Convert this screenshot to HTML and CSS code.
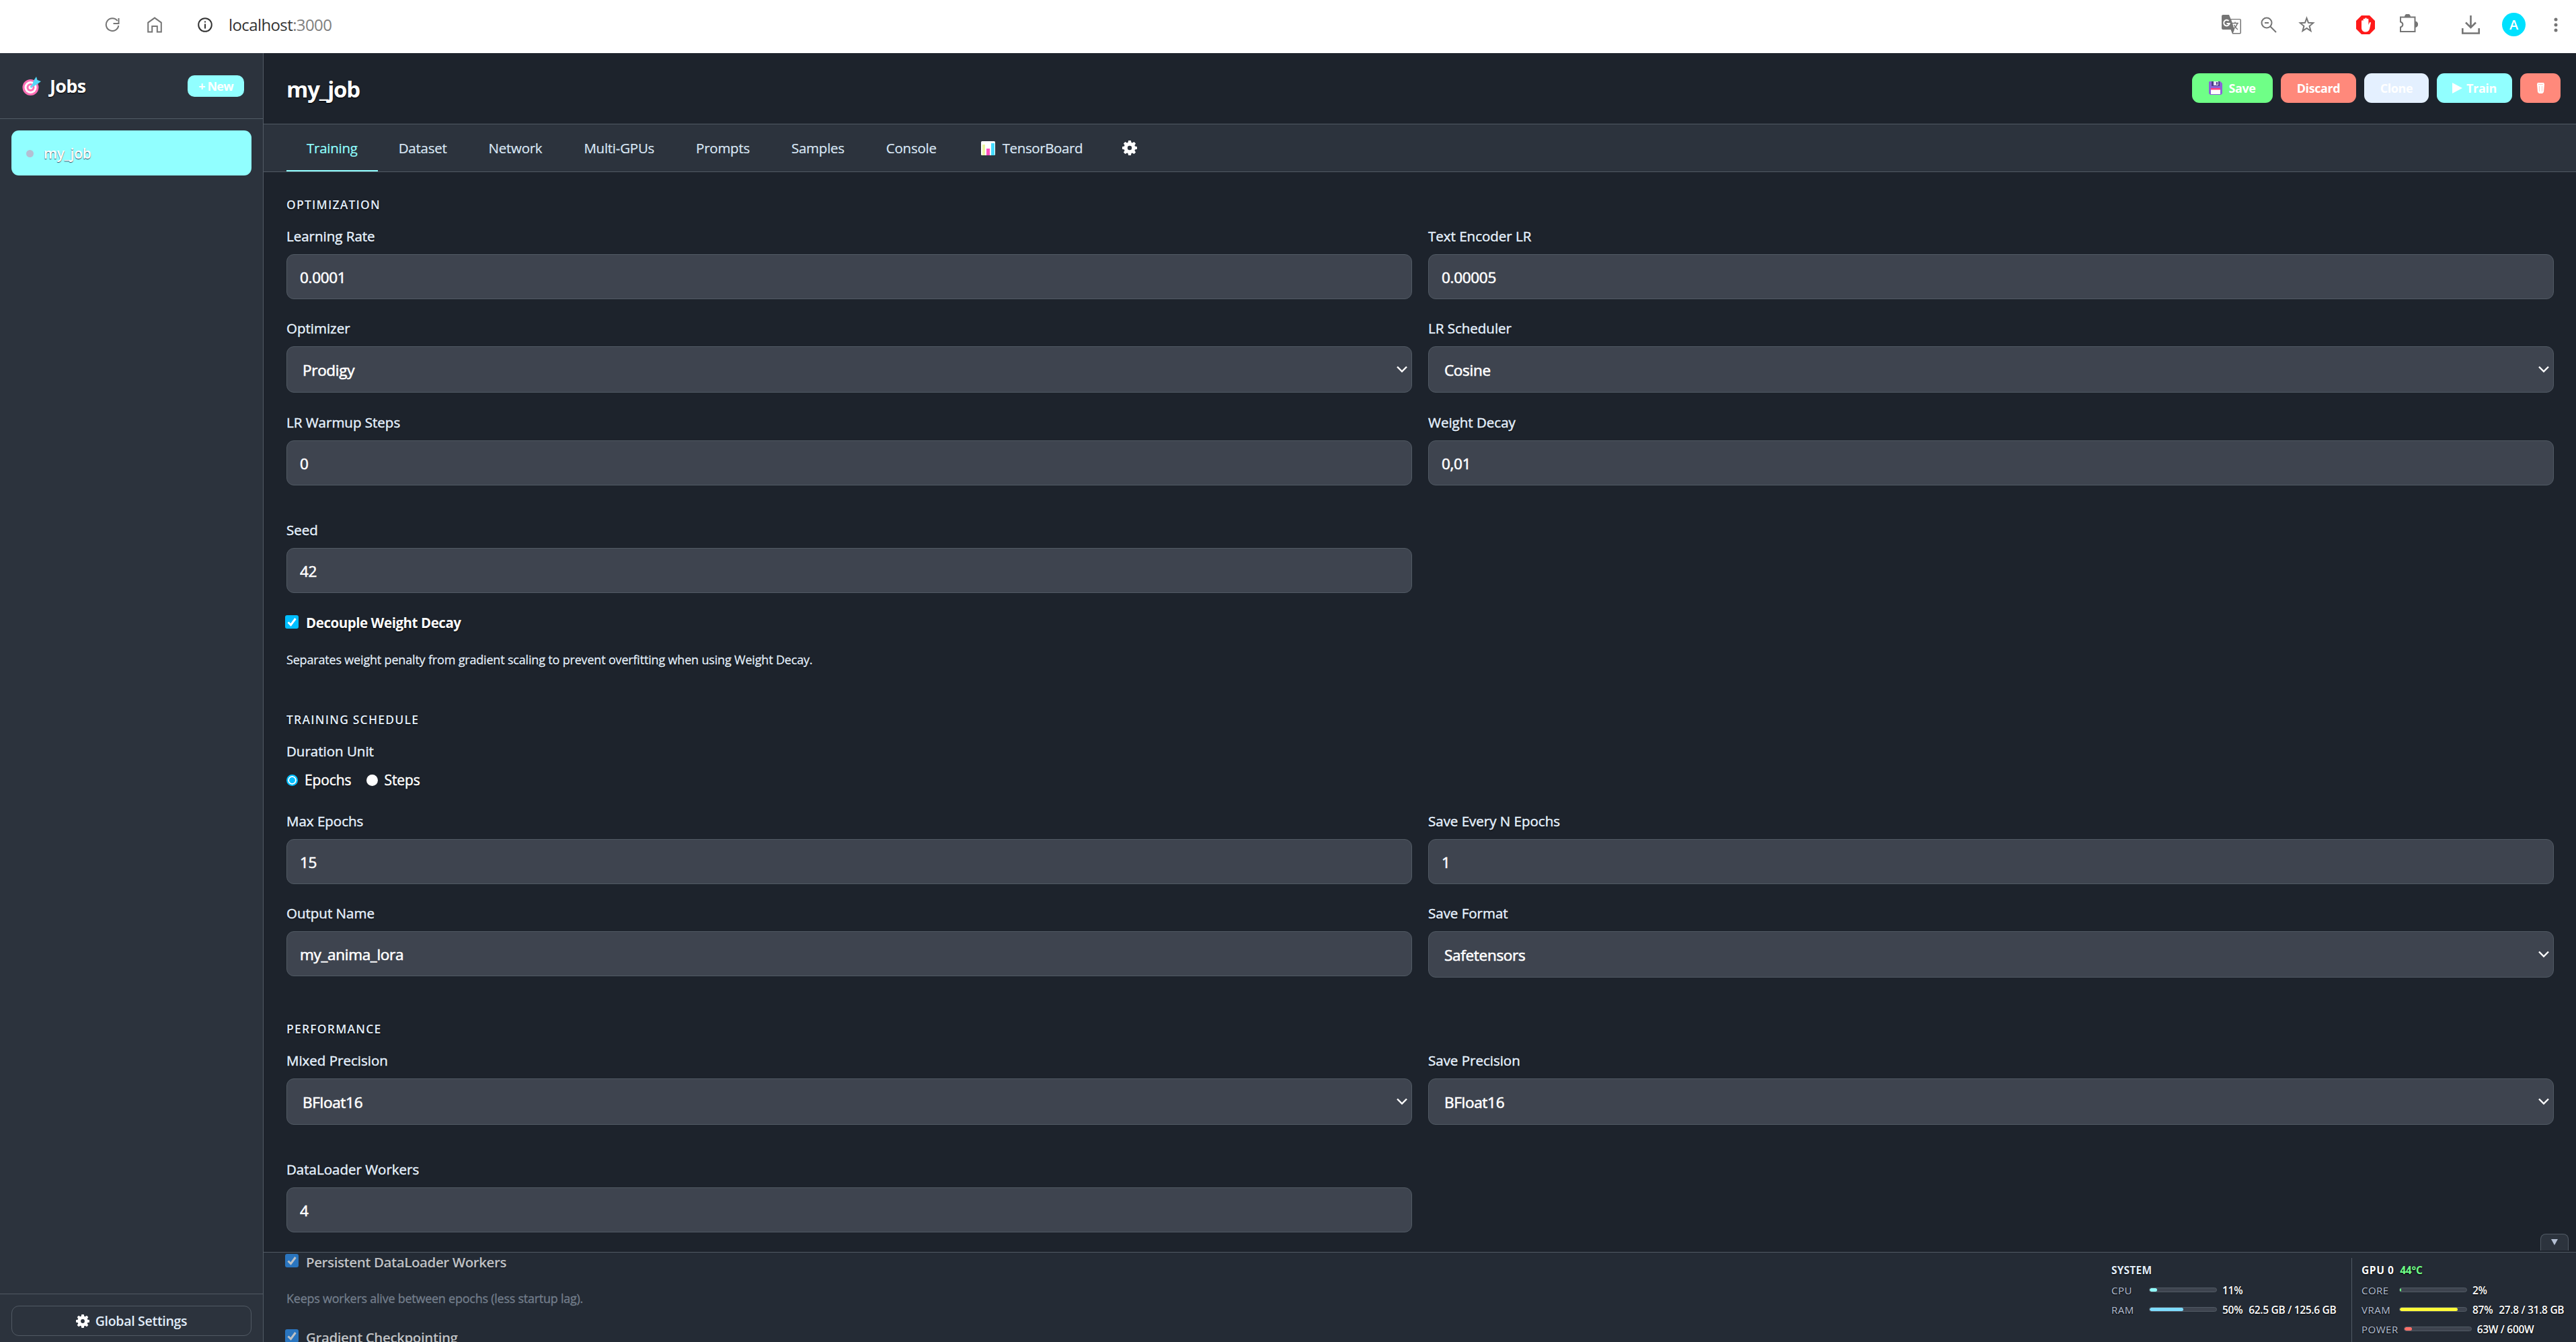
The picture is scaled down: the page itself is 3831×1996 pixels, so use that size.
FILE: index.html
```html
<!DOCTYPE html>
<html lang="en">
<head>
    <meta charset="UTF-8">
    <meta name="viewport" content="width=device-width, initial-scale=1.0">
    <title>my_job</title>
    <link rel="stylesheet" href="styles.css">
</head>
<body>
    <!-- Browser Toolbar -->
    <div class="toolbar">
        <div class="toolbar-left">
            <svg class="icon-reload" viewBox="0 0 22 22"><path d="M18.500 5A9.300 9.300 0 1 0 20.300 12M20.500 1v8h-8"/></svg>
            <svg class="icon-home" viewBox="0 0 22 24"><path d="M1.200 22.600V8.600L11 1.600l9.800 7v14h-6V14H7.200v8.600z"/></svg>
            <svg class="icon-info" viewBox="0 0 22 22"><circle cx="11" cy="11" r="9.800"/><path d="M11 9.500v7M11 5.500v2"/></svg>
            <span class="url">localhost<span>:3000</span></span>
        </div>
        <div class="toolbar-right">
            <svg class="icon-translate" viewBox="0 0 29 29"><path d="M2 0h9l2.500 6H27a2 2 0 0 1 2 2v18.500a2 2 0 0 1-2 2H16L13.500 22H2a2 2 0 0 1-2-2V2a2 2 0 0 1 2-2z" fill="#757575"/><path d="M14.200 7.300h13.300v19.800H17l2-5z" fill="#fff"/><path d="M15 12.500h10M20 10.500v2M23.500 12.500c-1 4-3 6-5.500 8.500M18.500 15c1 3 3 5 5.500 7" stroke="#757575" stroke-width="1.400" fill="none"/><path d="M10.500 9a4.300 4.300 0 1 0 1.200 4H7.500" stroke="#fff" stroke-width="2" fill="none"/></svg>
            <svg class="icon-zoom" viewBox="0 0 24 24"><circle cx="9" cy="9" r="7.500"/><path d="M6 9h6M14.500 14.500L23 23"/></svg>
            <svg class="icon-star" viewBox="0 0 25 25"><path d="M12.500 3l2.500 6.800 7.200.4-5.600 4.600 1.900 7.200-6-4.100-6 4.100 1.900-7.200-5.600-4.600 7.200-.4z"/></svg>
            <svg class="icon-block" viewBox="0 0 28 28"><path d="M8 0h12l8 8v12l-8 8H8l-8-8V8z" fill="#ff1a1a"/><path d="M8 18V8.500a1.300 1.300 0 0 1 2.600 0V6a1.300 1.300 0 0 1 2.600 0V4.800a1.300 1.300 0 0 1 2.600 0V6a1.300 1.300 0 0 1 2.600 0v8l1.500-3.500c.8-1 2.300-.5 2 .8L20 20c-1 3-3 4.500-6 4.500-4 0-6-2.500-6-6.500z" fill="#fff"/></svg>
            <svg class="icon-puzzle" viewBox="0 0 28 28"><path d="M2 4.500h21.500V26H2v-6.500c4.500-1.500 4.500-6.500 0-8z"/><path d="M9 4a3.500 3.500 0 0 1 7 0zM24 11.500a3.800 3.800 0 0 1 0 7.500z" fill="#757575"/></svg>
            <svg class="icon-download" viewBox="0 0 27 28"><path d="M13.500 0v17M6 10.500l7.500 7.500 7.500-7.500M1.300 19v7.500h24.400V19"/></svg>
            <span class="avatar">A</span>
            <svg class="icon-dots" viewBox="0 0 6 22"><circle cx="3" cy="3" r="2.500"/><circle cx="3" cy="11" r="2.500"/><circle cx="3" cy="19" r="2.500"/></svg>
        </div>
    </div>

    <div class="app">
        <!-- Sidebar -->
        <div class="sidebar">
            <div class="sidebar-header">
                <svg class="icon-target" viewBox="0 0 28 28"><circle cx="12.500" cy="16" r="12" fill="#ff6fb5"/><circle cx="12.500" cy="16" r="9" fill="#fff"/><circle cx="12.500" cy="16" r="6" fill="#ff6fb5"/><circle cx="12.500" cy="16" r="3" fill="#fff"/><path d="M12.500 16L21 7" stroke="#6fd0f0" stroke-width="3"/><path d="M15 12l2-6 4-6 1.500 5 5.500 2-6 4.500-5 3z" fill="#56d6f7"/></svg>
                <h2>Jobs</h2>
                <button class="btn-new">+ New</button>
            </div>
            <div class="job-list">
                <div class="job-item"><span class="dot"></span><span>my_job</span></div>
            </div>
            <div class="sidebar-footer">
                <button class="btn-settings">
                    <svg class="icon-gear" viewBox="0 0 24 24"><use href="#gear"/></svg>
                    <span>Global Settings</span>
                </button>
            </div>
        </div>

        <div class="main">
            <div class="main-header">
                <h1>my_job</h1>
                <div class="actions">
                    <button class="btn btn-save"><svg viewBox="0 0 20 20"><path d="M1 0h16l3 3v15l-2 2H2l-2-2V1z" fill="#8a63d8"/><path d="M4 0h12v7H4z" fill="#4a3c86"/><path d="M7 0h7v6H7z" fill="#e6e2f5"/><path d="M11 1h2v4h-2z" fill="#4a3c86"/><path d="M3 10h14v9H3z" fill="#fff"/><path d="M3 10h14v2.500H3z" fill="#ff3d7f"/></svg><span>Save</span></button>
                    <button class="btn btn-discard"><span>Discard</span></button>
                    <button class="btn btn-clone"><span>Clone</span></button>
                    <button class="btn btn-train"><svg viewBox="0 0 15 16"><path d="M0 0l15 8-15 8z" fill="#fff"/></svg><span>Train</span></button>
                    <button class="btn btn-delete"><svg viewBox="0 0 11 16"><path d="M1 0h9l1 2-1 12-2 2H3l-2-2L0 2z" fill="#fff"/><path d="M2 2.500h7M3.500 5v8M7.500 5v8" stroke="#ffb9b0" stroke-width=".8"/></svg></button>
                </div>
            </div>

            <!-- Tabs -->
            <div class="tabs">
                <div class="tab active">Training</div>
                <div class="tab">Dataset</div>
                <div class="tab">Network</div>
                <div class="tab">Multi-GPUs</div>
                <div class="tab">Prompts</div>
                <div class="tab">Samples</div>
                <div class="tab">Console</div>
                <div class="tab tab-board"><svg viewBox="0 0 21 21"><rect width="21" height="21" rx="1.500" fill="#fff"/><path d="M2 5h4v16H2z" fill="#e9f5a0"/><path d="M8 11h5v10H8z" fill="#ff4fc0"/><path d="M15 3h5v18h-5z" fill="#45dcff"/></svg><span>TensorBoard</span></div>
                <div class="tab tab-gear"><svg class="icon-gear" viewBox="0 0 24 24"><g id="gear"><path fill="#fff" fill-rule="evenodd" d="M10 0h4l.8 3.300 1.500.6L19.200 2.100l2.700 2.700-1.800 2.900.6 1.500L24 10v4l-3.300.8-.6 1.500 1.800 2.900-2.700 2.700-2.900-1.800-1.500.6L14 24h-4l-.8-3.300-1.500-.6-2.900 1.800-2.700-2.700 1.800-2.900-.6-1.500L0 14v-4l3.300-.8.6-1.500L2.100 4.800l2.700-2.700 2.900 1.800 1.500-.6zM12 8.500a3.500 3.500 0 1 0 0 7 3.500 3.500 0 0 0 0-7z"/></g></svg></div>
            </div>

            <!-- Training Form -->
            <div class="content">
                <h3>Optimization</h3>
                <div class="row">
                    <div class="field"><label>Learning Rate</label><input type="text" value="0.0001"></div>
                    <div class="field"><label>Text Encoder LR</label><input type="text" value="0.00005"></div>
                </div>
                <div class="row row-select">
                    <div class="field"><label>Optimizer</label><div class="select">Prodigy<svg viewBox="0 0 16 10"><path d="M1 1.500l7 7 7-7"/></svg></div></div>
                    <div class="field"><label>LR Scheduler</label><div class="select">Cosine<svg viewBox="0 0 16 10"><path d="M1 1.500l7 7 7-7"/></svg></div></div>
                </div>
                <div class="row row-wide">
                    <div class="field"><label>LR Warmup Steps</label><input type="text" value="0"></div>
                    <div class="field"><label>Weight Decay</label><input type="text" value="0,01"></div>
                </div>
                <div class="row row-last">
                    <div class="field"><label>Seed</label><input type="text" value="42"></div>
                </div>
                <div class="check"><span class="checkbox"><svg viewBox="0 0 20 20"><path d="M4.500 10.500l4 4L15.500 5"/></svg></span><b>Decouple Weight Decay</b></div>
                <p class="hint">Separates weight penalty from gradient scaling to prevent overfitting when using Weight Decay.</p>

                <h3 class="next">Training Schedule</h3>
                <label>Duration Unit</label>
                <div class="radios">
                    <span class="radio on"></span><span class="radio-text">Epochs</span>
                    <span class="radio"></span><span class="radio-text">Steps</span>
                </div>
                <div class="row">
                    <div class="field"><label>Max Epochs</label><input type="text" value="15"></div>
                    <div class="field"><label>Save Every N Epochs</label><input type="text" value="1"></div>
                </div>
                <div class="row row-end">
                    <div class="field"><label>Output Name</label><input type="text" value="my_anima_lora"></div>
                    <div class="field"><label>Save Format</label><div class="select">Safetensors<svg viewBox="0 0 16 10"><path d="M1 1.500l7 7 7-7"/></svg></div></div>
                </div>

                <h3 class="next">Performance</h3>
                <div class="row row-wide">
                    <div class="field"><label>Mixed Precision</label><div class="select">BFloat16<svg viewBox="0 0 16 10"><path d="M1 1.500l7 7 7-7"/></svg></div></div>
                    <div class="field"><label>Save Precision</label><div class="select">BFloat16<svg viewBox="0 0 16 10"><path d="M1 1.500l7 7 7-7"/></svg></div></div>
                </div>
                <div class="row row-select">
                    <div class="field"><label>DataLoader Workers</label><input type="text" value="4"></div>
                </div>
                <div class="check dim"><span class="checkbox"><svg viewBox="0 0 20 20"><path d="M4.500 10.500l4 4L15.500 5"/></svg></span><b>Persistent DataLoader Workers</b></div>
                <p class="hint dim">Keeps workers alive between epochs (less startup lag).</p>
                <div class="check dim"><span class="checkbox"><svg viewBox="0 0 20 20"><path d="M4.500 10.500l4 4L15.500 5"/></svg></span><b>Gradient Checkpointing</b></div>
            </div>

            <!-- Hardware monitor, floats over the form -->
            <div class="monitor">
                <div class="monitor-toggle"></div>
                <div class="system">
                    <div class="monitor-title soft">SYSTEM</div>
                    <div class="stat"><span class="name">CPU</span><span class="bar"><i class="fill cyan" style="width: 11%"></i></span><span>11%</span></div>
                    <div class="stat"><span class="name">RAM</span><span class="bar"><i class="fill blue" style="width: 50%"></i></span><span>50%</span><span class="amount">62.5 GB / 125.6 GB</span></div>
                </div>
                <div class="gpu">
                    <div class="monitor-title">GPU 0 <span class="temp">44°C</span></div>
                    <div class="stat"><span class="name">CORE</span><span class="bar"><i class="fill green" style="width: 2%"></i></span><span>2%</span></div>
                    <div class="stat"><span class="name">VRAM</span><span class="bar"><i class="fill yellow" style="width: 87%"></i></span><span>87%</span><span class="amount">27.8 / 31.8 GB</span></div>
                    <div class="stat"><span class="name">POWER</span><span class="bar"><i class="fill red" style="width: 11%"></i></span><span>63W / 600W</span></div>
                </div>
            </div>
        </div>
    </div>
</body>
</html>
```

FILE: styles.css
```css
/* General Styles */
* {
    box-sizing: border-box;
}

body {
    font-family: 'Open Sans', 'Noto Sans', sans-serif;
    margin: 0;
    height: 1996px;
    overflow: hidden;
    background: #1d232c;
    color: #fff;
    font-size: 21px;
}

h1, h2, h3, p {
    margin: 0;
}

button {
    font-family: inherit;
    border: none;
    color: #fff;
    padding: 0;
}

svg {
    display: block;
    flex: none;
    fill: none;
}

/* Browser Toolbar */
.toolbar {
    height: 79px;
    background: #fff;
    display: flex;
    justify-content: space-between;
    padding: 0 27px 6px 156px;
}

.toolbar-left, .toolbar-right {
    display: flex;
    align-items: center;
}

.toolbar svg {
    stroke: #757575;
    stroke-width: 2;
}

.icon-reload { width: 22px; height: 22px; }
.icon-home { width: 22px; height: 24px; margin-left: 41px; }
.toolbar .icon-info { width: 22px; height: 22px; margin-left: 53px; stroke: #333; }

.url {
    margin-left: 24px;
    font-size: 24px;
    letter-spacing: -0.6px;
    color: #333;
}

.url span {
    color: #808080;
}

.toolbar .icon-translate { width: 29px; height: 29px; stroke: none; }
.icon-zoom { width: 24px; height: 24px; margin-left: 29px; }
.icon-star { width: 25px; height: 25px; margin-left: 32px; }
.toolbar .icon-block { width: 28px; height: 28px; margin-left: 61px; stroke: none; }
.icon-puzzle { width: 28px; height: 28px; margin-left: 36px; margin-bottom: 3px; }
.toolbar .icon-download { width: 27px; height: 28px; margin-left: 65px; stroke-width: 2.6; }
.toolbar .icon-dots { width: 6px; height: 22px; margin-left: 42px; fill: #757575; stroke: none; }

.avatar {
    width: 35px;
    height: 35px;
    margin-left: 33px;
    border-radius: 50%;
    background: #00e1ff;
    color: #fff;
    font-size: 20px;
    font-weight: 600;
    line-height: 35px;
    text-align: center;
}

.app {
    display: flex;
    height: 1917px;
}

/* Sidebar */
.sidebar {
    width: 392px;
    flex: none;
    display: flex;
    flex-direction: column;
    background: #2c333d;
    border-right: 1px solid #515a64;
}

.sidebar-header {
    height: 98px;
    display: flex;
    align-items: center;
    padding: 0 28px 0 33px;
    border-bottom: 1px solid #515a64;
}

.icon-target {
    width: 28px;
    height: 28px;
}

h2 {
    margin-left: 13px;
    font-size: 27px;
    font-weight: 700;
    letter-spacing: -0.7px;
    text-shadow: 0 1px 2px #000;
}

.btn-new {
    width: 84px;
    height: 32px;
    margin-left: auto;
    border-radius: 10px;
    background: #91ffff;
    font-size: 18px;
    font-weight: 700;
    letter-spacing: -0.8px;
}

.job-list {
    flex: 1;
    padding: 17px 17px 0;
}

.job-item {
    height: 67px;
    display: flex;
    align-items: center;
    padding: 1px 0 0 22px;
    border-radius: 11px;
    background: #91ffff;
    font-weight: 600;
    letter-spacing: -0.2px;
    text-shadow: 0 1px 1px #33445c;
}

.dot {
    width: 11px;
    height: 11px;
    margin-right: 15px;
    border-radius: 50%;
    background: #b4bfd3;
}

.sidebar-footer {
    height: 72px;
    padding: 17px 17px 0;
    border-top: 1px solid #515a64;
}

.btn-settings {
    width: 100%;
    height: 45px;
    display: flex;
    align-items: center;
    justify-content: center;
    gap: 9px;
    border: 1px solid #515a64;
    border-radius: 11px;
    background: transparent;
    color: #e2eefb;
    font-size: 19.5px;
    font-weight: 600;
    letter-spacing: -0.3px;
}

.btn-settings .icon-gear {
    width: 20px;
    height: 20px;
}

/* Main Header */
.main {
    flex: 1;
    position: relative;
    display: flex;
    flex-direction: column;
}

.main-header {
    height: 106px;
    display: flex;
    align-items: center;
    justify-content: space-between;
    padding: 0 23px 1px 34px;
    border-bottom: 1px solid #515a64;
}

h1 {
    padding-top: 3px;
    font-size: 33px;
    font-weight: 700;
    letter-spacing: -1.2px;
    text-shadow: 0 1px 2px #000;
}

.actions {
    display: flex;
    gap: 12px;
}

.btn {
    height: 44px;
    display: flex;
    align-items: center;
    justify-content: center;
    border-radius: 11px;
    font-size: 18px;
    font-weight: 700;
    letter-spacing: -0.4px;
}

.btn-save { width: 120px; background: #6fff87; }
.btn-save svg { width: 20px; height: 20px; margin-right: 9px; }
.btn-discard { width: 112px; background: #ff897b; }
.btn-clone { width: 96px; background: #e4f0ff; }
.btn-train { width: 112px; background: #91ffff; }
.btn-train svg { width: 15px; height: 16px; margin-right: 6px; }
.btn-delete { width: 60px; background: #ff897b; }
.btn-delete svg { width: 11px; height: 16px; }

/* Tabs */
.tabs {
    height: 71px;
    display: flex;
    padding-left: 34px;
    background: #2c333d;
    border-bottom: 1px solid #515a64;
    color: #dae7f5;
}

.tab {
    display: flex;
    align-items: center;
    padding: 2px 31px 0;
    font-size: 20.5px;
    letter-spacing: -0.25px;
    border-bottom: 2px solid transparent;
    -webkit-text-stroke: 0.2px currentColor;
}

.tab.active {
    padding: 2px 30px 0;
    color: #91ffff;
    border-bottom-color: #91ffff;
}

.tab-board {
    padding-left: 35px;
    padding-right: 28px;
    letter-spacing: -0.4px;
}

.tab-board svg {
    width: 21px;
    height: 21px;
    margin-right: 11px;
}

.tab-gear svg {
    width: 22px;
    height: 22px;
}

/* Form */
.content {
    flex: 1;
    min-height: 0;
    overflow: hidden;
    padding: 36px 33px 0 34px;
}

h3 {
    height: 24px;
    margin-bottom: 20px;
    font-size: 17.5px;
    line-height: 24px;
    font-weight: 600;
    letter-spacing: 1.2px;
    text-transform: uppercase;
    color: #e2eefb;
    text-shadow: 0 1px 2px #000;
}

.next {
    margin-top: 64px;
}

.row {
    display: grid;
    grid-template-columns: 1fr 1fr;
    gap: 24px;
    margin-bottom: 28px;
}

.row-select { margin-bottom: 29px; }
.row-wide { margin-bottom: 51px; }
.row-last { margin-bottom: 30px; }
.row-end { margin-bottom: 0; }

label {
    display: block;
    height: 30px;
    margin-bottom: 13px;
    font-size: 20.5px;
    line-height: 30px;
    color: #e2eefb;
    text-shadow: 0 1px 2px #000;
    -webkit-text-stroke: 0.5px currentColor;
}

.field label {
    margin-bottom: 12px;
}

input, .select {
    display: block;
    width: 100%;
    height: 67px;
    padding: 1px 19px 0;
    font-family: inherit;
    font-size: 22.5px;
    letter-spacing: -0.3px;
    color: #fff;
    background: #3e444f;
    border: 1px solid #515a64;
    border-radius: 11px;
    -webkit-text-stroke: 0.6px currentColor;
}

.select {
    height: 69px;
    display: flex;
    align-items: center;
    justify-content: space-between;
    padding: 1px 6px 0 23px;
}

.select svg {
    width: 16px;
    height: 10px;
    margin-bottom: 3px;
    stroke: #fff;
    stroke-width: 2.4;
}

.check {
    display: flex;
    align-items: center;
    height: 30px;
    margin-left: -2px;
    font-size: 20.5px;
    letter-spacing: -0.45px;
    text-shadow: 0 1px 2px #000;
}

.check b {
    margin: 0 0 2px 11px;
    font-weight: 700;
}

.checkbox {
    width: 20px;
    height: 20px;
    margin-bottom: 4px;
    border-radius: 3px;
    background: #00beff;
}

.checkbox svg {
    stroke: #fff;
    stroke-width: 3;
}

.hint {
    height: 26px;
    margin: 26px 0 30px;
    font-size: 18px;
    line-height: 26px;
    letter-spacing: -0.18px;
    color: #e2eefb;
    text-shadow: 0 1px 2px #000;
    -webkit-text-stroke: 0.3px currentColor;
}

.check.dim {
    letter-spacing: -0.4px;
}

.check.dim b {
    margin-bottom: 0;
    font-weight: 600;
}

.dim .checkbox {
    background: #258ff6;
}

.hint.dim {
    color: #919caa;
    letter-spacing: -0.25px;
    text-shadow: none;
}

.radios {
    display: flex;
    align-items: center;
    height: 30px;
    margin-bottom: 31px;
}

.radio {
    width: 17px;
    height: 17px;
    border-radius: 50%;
    background: #fff;
}

.radio.on {
    border: 2px solid #00beff;
    background: #00beff;
    box-shadow: inset 0 0 0 2px #fff;
}

.radio-text {
    margin: 0 22px 0 10px;
    letter-spacing: -0.1px;
    text-shadow: 0 1px 2px #000;
    -webkit-text-stroke: 0.5px currentColor;
}

/* Hardware Monitor */
.monitor {
    position: absolute;
    left: 0;
    right: 0;
    bottom: 0;
    height: 134px;
    display: flex;
    justify-content: flex-end;
    padding-top: 8px;
    border-top: 1px solid #515a64;
    background: rgba(53, 63, 75, 0.32);
    font-size: 15.5px;
    font-weight: 600;
    letter-spacing: -0.3px;
    text-shadow: 0 1px 2px #000;
}

.monitor-toggle {
    position: absolute;
    right: 11px;
    top: -28px;
    width: 42px;
    height: 25px;
    border: 1px solid #515a64;
    border-bottom: none;
    border-radius: 8px 8px 0 0;
    background: #2c333d;
}

.monitor-toggle::after {
    content: "";
    position: absolute;
    left: 15px;
    top: 7px;
    border: 5px solid transparent;
    border-top: 9px solid #b4bfd3;
    border-bottom: none;
}

.system {
    width: 357px;
}

.gpu {
    width: 334px;
    padding-left: 14px;
    border-left: 1px solid #515a64;
}

.monitor-title {
    height: 33px;
    line-height: 36px;
    font-weight: 700;
    letter-spacing: 0.6px;
}

.monitor-title.soft {
    color: #e2eefb;
    letter-spacing: 0.2px;
}

.temp {
    margin-left: 4px;
    color: #6fff87;
    letter-spacing: -0.2px;
}

.stat {
    display: flex;
    align-items: center;
    height: 29px;
    white-space: nowrap;
}

.name {
    min-width: 56px;
    padding-right: 8px;
    font-size: 15px;
    font-weight: 400;
    letter-spacing: 0.5px;
    color: #b4bfd3;
}

.bar {
    width: 101px;
    height: 7px;
    margin-right: 8px;
    border: 1px solid #515a64;
    border-radius: 4px;
    background: #3e444f;
    overflow: hidden;
}

.fill {
    display: block;
    height: 100%;
    border-radius: 4px;
}

.cyan { background: #91ffff; }
.blue { background: #7edcff; }
.green { background: #6fff87; }
.yellow { background: #fffb38; }
.red { background: #ff6f68; }

.amount {
    margin-left: 9px;
}
```
